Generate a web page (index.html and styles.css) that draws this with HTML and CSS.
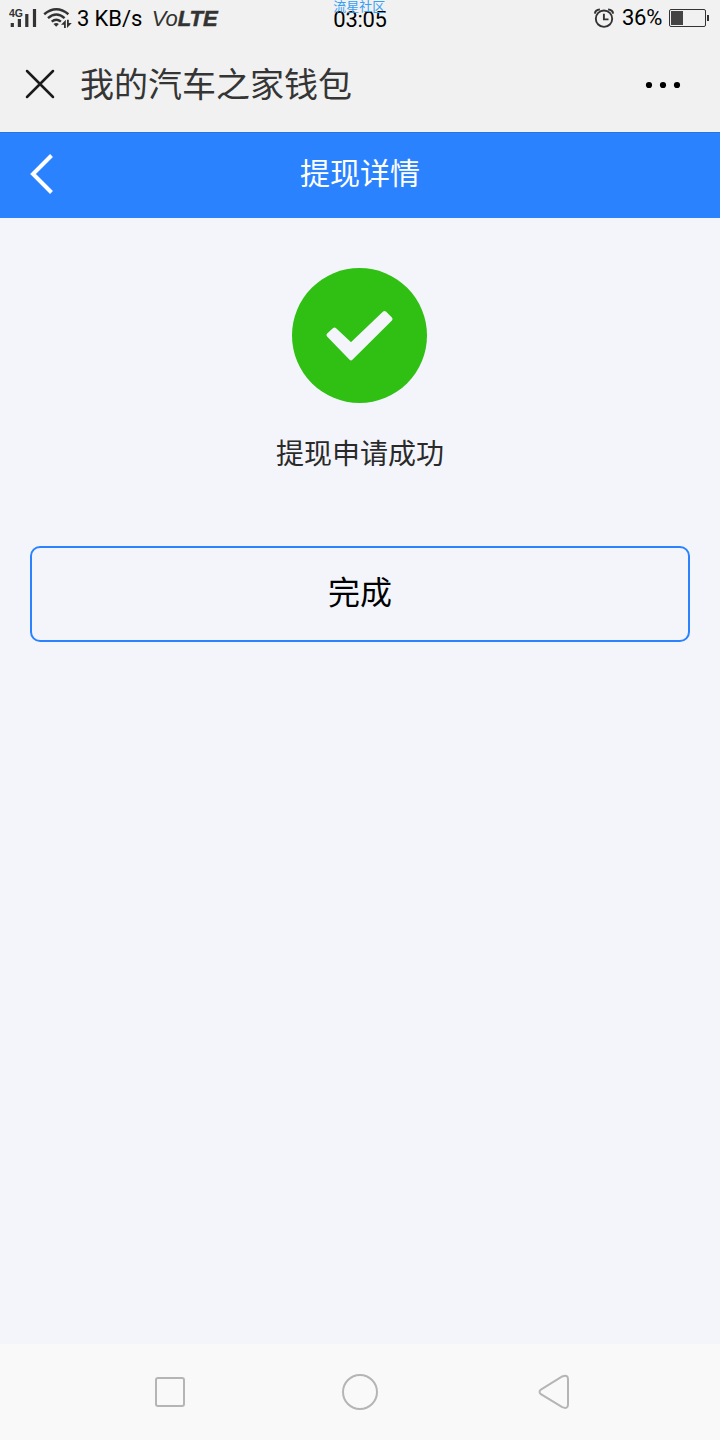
FILE: index.html
```html
<!DOCTYPE html>
<html lang="zh-CN">
<head>
<meta charset="utf-8">
<title>我的汽车之家钱包</title>
<link rel="stylesheet" href="styles.css">
</head>
<body>
<div class="screen">
  <div class="status">
    <div class="status-left">
      <svg class="signal" width="28" height="20" viewBox="9 8 28 20">
        <text class="net" x="9" y="16.5" textLength="14" lengthAdjust="spacingAndGlyphs">4G</text>
        <path d="M10.7 23h3.2v4h-3.2zM17.8 19h3.2v8h-3.2zM25.2 14h3.2v13h-3.2zM32.9 9h3.2v18h-3.2z" fill="#333"/>
      </svg>
      <svg class="wifi" width="30" height="22" viewBox="43 8 30 22">
        <g fill="none" stroke="#333" stroke-width="2.5">
          <path d="M44.2 15.2Q56.3 5.4 68.4 15.2"/>
          <path d="M48 19.1Q56.3 12 64.6 19.1"/>
          <path d="M51.7 22.6Q56.3 18.8 60.9 22.6"/>
        </g>
        <path d="M53.5 25.1Q56.2 22.9 58.9 25.1L56.2 27.8z" fill="#333"/>
        <path d="M65.8 20.8V29h-1.8v-3.2h-3zM67 29v-8.2h1.8v3.2h3z" fill="#333"/>
      </svg>
      <span class="speed">3 KB/s</span>
      <span class="volte">Vo<b>LTE</b></span>
    </div>
    <div class="clock"><span class="mark">流星社区</span>03:05</div>
    <div class="status-right">
      <svg class="alarm" width="22" height="22" viewBox="593 7 22 22">
        <g fill="none" stroke="#333">
          <circle cx="604" cy="18.7" r="8.2" stroke-width="1.9"/>
          <path d="M603.9 13.7v5.7h4.6" stroke-width="1.9"/>
          <path d="M594.9 13.6q.2-4 5-4.2M613.1 13.6q-.2-4-5-4.2" stroke-width="2"/>
        </g>
      </svg>
      <span class="percent">36%</span>
      <svg class="battery" width="41" height="20" viewBox="668 8 41 20">
        <rect x="669.5" y="9.5" width="36" height="17" rx="1.5" fill="none" stroke="#333"/>
        <path d="M671 11h12v14h-12z" fill="#444"/>
        <path d="M707 15h2v6h-2z" fill="#333"/>
      </svg>
    </div>
  </div>

  <header class="titlebar">
    <svg class="close" width="30" height="30" viewBox="0 0 30 30"><path d="M2 2l26 26M28 2L2 28" stroke="#1a1a1a" stroke-width="2.5" stroke-linecap="round"/></svg>
    <h1 class="title">我的汽车之家钱包</h1>
    <svg class="more" width="36" height="8" viewBox="0 0 36 8"><circle cx="4" cy="4" r="3.1"/><circle cx="18" cy="4" r="3.1"/><circle cx="32" cy="4" r="3.1"/></svg>
  </header>

  <nav class="navbar">
    <svg class="back" width="24" height="42" viewBox="0 0 24 42"><path d="M21.5 2.5L3 21l18.5 18.5" fill="none" stroke="#fff" stroke-width="4"/></svg>
    <h2 class="nav-title">提现详情</h2>
  </nav>

  <main class="content">
    <svg class="success" width="136" height="136" viewBox="0 0 136 136">
      <circle cx="67.5" cy="67.5" r="67.5" fill="#2fc013"/>
      <path d="M42.5 61.5L59 77 92.500 45L98.500 51L59 90.400 36.500 67Z" fill="#f4f5fb" stroke="#f4f5fb" stroke-width="4" stroke-linejoin="round"/>
    </svg>
    <p class="message">提现申请成功</p>
    <button class="done" type="button">完成</button>
  </main>

  <footer class="sysnav">
    <svg width="30" height="30" viewBox="0 0 30 30"><rect x="1" y="1" width="28" height="28" rx="2"/></svg>
    <svg width="36" height="36" viewBox="0 0 36 36"><circle cx="18" cy="18" r="17"/></svg>
    <svg class="sysnav-back" width="32" height="36" viewBox="0 0 32 36"><path d="M2.9 15.6L24.2 2.5Q30 .2 30 5.2V30.4Q30 35.6 24.2 33.2L2.9 20.2Q.2 17.9 2.9 15.6Z"/></svg>
  </footer>
</div>
</body>
</html>
```
FILE: styles.css
```css
* { box-sizing: border-box; }

body {
  margin: 0;
  font-family: "Noto Sans CJK SC", sans-serif;
}

svg { display: block; flex: none; }

.screen {
  display: flex;
  flex-direction: column;
  width: 720px;
  height: 1440px;
  background: #f4f5fb;
}

.status {
  display: grid;
  grid-template-columns: 1fr auto 1fr;
  height: 40px;
  padding: 0 11px 0 9px;
  background: #f1f1f1;
  font-family: Roboto, "Noto Sans CJK SC", sans-serif;
  font-size: 22px;
  line-height: 36px;
  color: #000;
}

.status-left,
.status-right {
  display: flex;
  align-items: center;
  height: 36px;
  white-space: nowrap;
}

.status-right { justify-content: flex-end; }

.net {
  font: bold 10.5px "Liberation Sans", sans-serif;
  fill: #333;
}

.wifi { margin-left: 6px; }

.speed {
  margin: 2px 0 0 4px;
  letter-spacing: -0.1px;
}

.volte {
  margin: 2px 0 0 9.5px;
  font-family: "Liberation Sans", sans-serif;
  font-style: italic;
  color: #333;
}

.volte b { -webkit-text-stroke: 0.5px #333; }

.clock {
  position: relative;
  padding: 2px 0 0 2px;
  letter-spacing: -0.3px;
}

.mark {
  position: absolute;
  top: -2px;
  left: 2px;
  font-family: "Noto Sans CJK SC", sans-serif;
  font-size: 13px;
  line-height: 16px;
  letter-spacing: 0;
  color: #37a0f4;
  white-space: nowrap;
}

.percent {
  margin: 0 6px 0 7px;
  letter-spacing: -0.3px;
}

.titlebar {
  display: flex;
  align-items: center;
  height: 92px;
  padding: 0 39px 4px 25px;
  background: #f1f1f1;
}

.title {
  margin: 0 0 2px 25px;
  font-size: 34px;
  font-weight: 400;
  line-height: 50px;
  color: #353535;
}

.more { margin: 2px 0 0 auto; }

.navbar {
  display: grid;
  grid-template-columns: 60px 1fr 60px;
  align-items: center;
  height: 86px;
  border-top: 1px solid #2775e3;
  padding-bottom: 4px;
  background: #2a82ff;
}

.back { margin-left: 30px; }

.nav-title {
  margin: 0 0 6px;
  font-size: 30px;
  font-weight: 400;
  line-height: 44px;
  text-align: center;
  color: #fff;
}

.content {
  display: flex;
  flex: 1;
  flex-direction: column;
  align-items: center;
  padding: 50px 30px 0;
}

.message {
  margin: 28px 0 0;
  font-size: 28px;
  line-height: 40px;
  color: #2a2a2a;
}

.done {
  width: 100%;
  height: 96px;
  margin-top: 74px;
  padding: 0 0 8px;
  border: 2px solid #2a82ff;
  border-radius: 10px;
  background: transparent;
  font-family: inherit;
  font-size: 32px;
  color: #000;
}

.sysnav {
  display: grid;
  grid-template-columns: 187px 36px 1fr;
  align-items: center;
  height: 96px;
  padding: 0 150px 0 155px;
  background: #f9f9f9;
  fill: none;
  stroke: #b5b5b5;
  stroke-width: 2;
}

.sysnav-back { justify-self: end; }
```
